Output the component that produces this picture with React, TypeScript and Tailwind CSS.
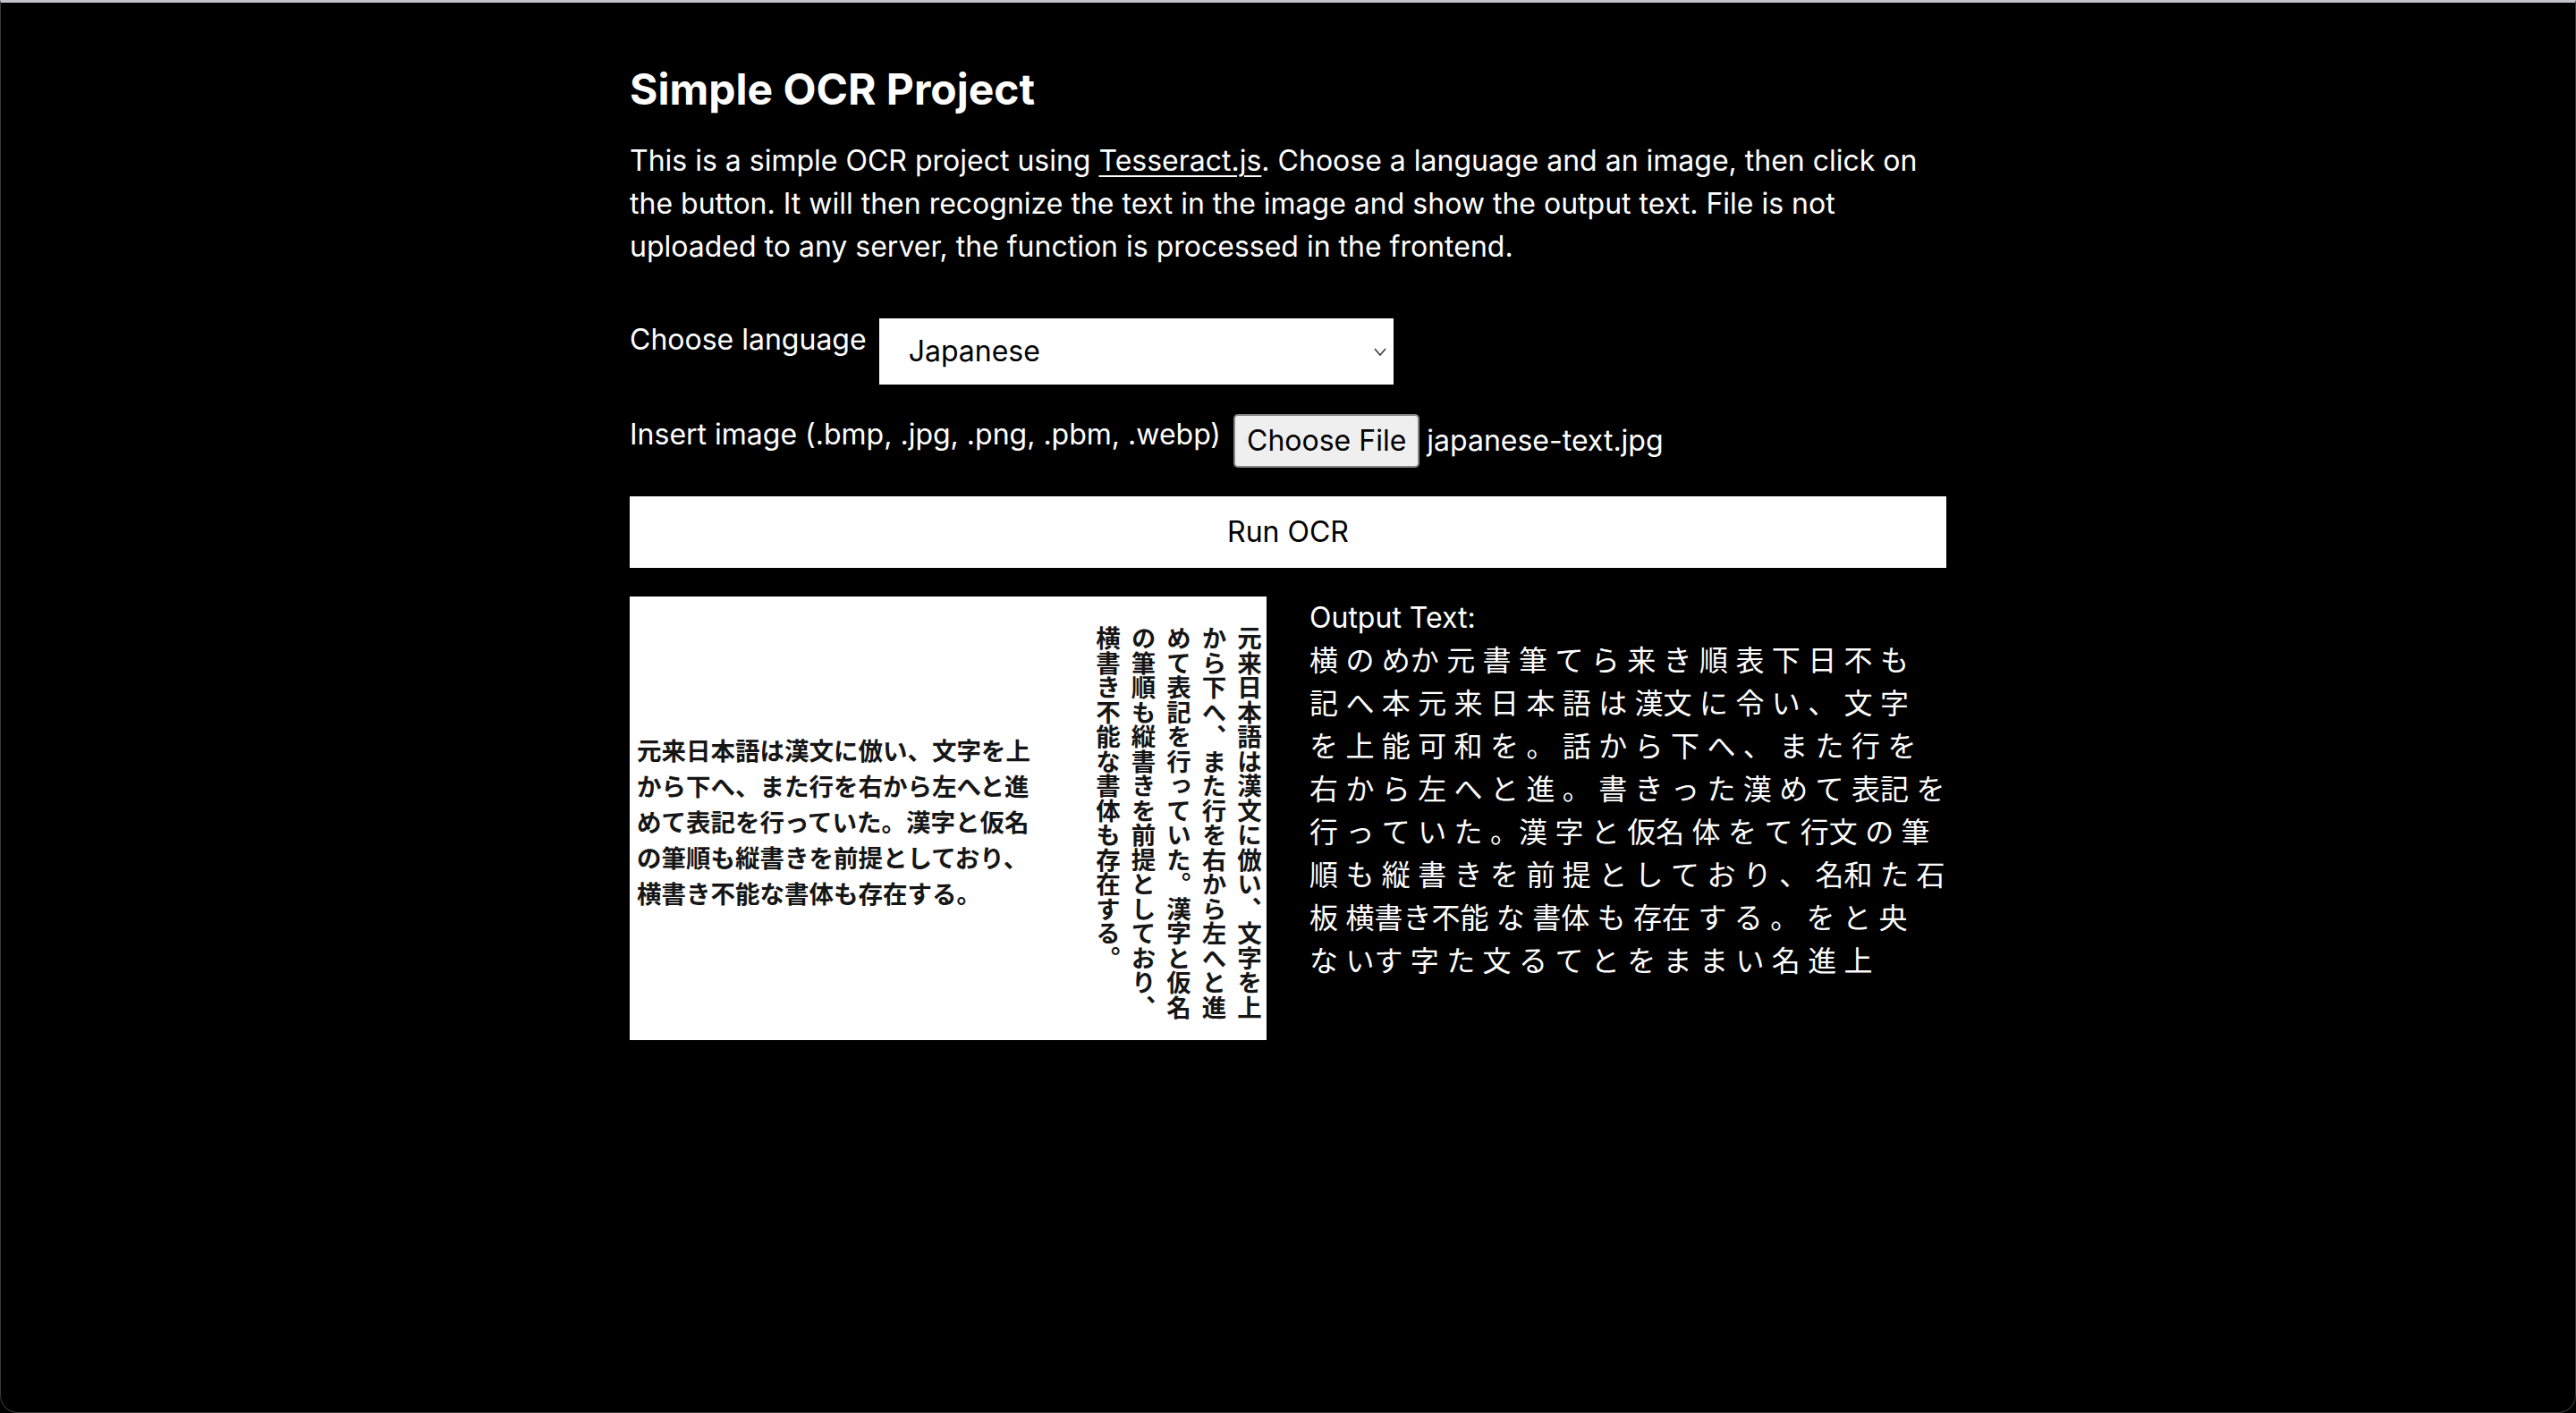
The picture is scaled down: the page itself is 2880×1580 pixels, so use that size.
import React from "react";

const outputLines = [
  "横 の めか 元 書 筆 て ら 来 き 順 表 下 日 不 も",
  "記 へ 本 元 来 日 本 語 は 漢文 に 令 い 、 文 字",
  "を 上 能 可 和 を 。 話 か ら 下 へ 、 ま た 行 を",
  "右 か ら 左 へ と 進 。 書 き っ た 漢 め て 表記 を",
  "行 っ て い た 。漢 字 と 仮名 体 を て 行文 の 筆",
  "順 も 縦 書 き を 前 提 と し て お り 、 名和 た 石",
  "板 横書き不能 な 書体 も 存在 す る 。 を と 央",
  "な いす 字 た 文 る て と を ま ま い 名 進 上",
];

const imageLines = [
  "元来日本語は漢文に倣い、文字を上",
  "から下へ、また行を右から左へと進",
  "めて表記を行っていた。漢字と仮名",
  "の筆順も縦書きを前提としており、",
  "横書き不能な書体も存在する。",
];

export default function App() {
  return (
    <div className="w-full bg-black">
      <div className="h-[1580px] box-border bg-black text-white border-t-[3px] border-t-[#c4c4c8] border-x border-b border-x-[#3a3a3a] border-b-[#3a3a3a] rounded-b-[20px] font-['Inter','Noto_Sans_CJK_JP',sans-serif]">
        <main className="mx-auto w-[1472px] pt-[61px]">
          <h1 className="text-[48px] leading-[72px] font-bold">Simple OCR Project</h1>
          <p className="mt-[20px] text-[32px] leading-[48px]">
            This is a simple OCR project using <a className="underline underline-offset-[5px] decoration-2">Tesseract.js</a>. Choose a
            language and an image, then click on the button. It will then recognize the text in the image and show the output text. File is
            not uploaded to any server, the function is processed in the frontend.
          </p>

          <div className="mt-[56px] flex flex-col gap-[32px]">
            <div className="flex items-start gap-[14px]">
              <span className="text-[32px] leading-[48px]">Choose language</span>
              <div className="w-[575px] h-[74px] bg-white text-black flex items-center justify-between pl-[33px] pr-[8px] text-[32px] leading-[48px]">
                <span>Japanese</span>
                <svg width="14" height="9" viewBox="0 0 14 9" fill="none">
                  <path d="M1 1 L7 8 L13 1" stroke="#3a3a3a" strokeWidth="1.6" />
                </svg>
              </div>
            </div>

            <div className="flex items-start gap-[14px]">
              <span className="text-[32px] leading-[48px]">Insert image (.bmp, .jpg, .png, .pbm, .webp)</span>
              <div className="flex items-center gap-[8px] h-[60px] mt-[1px]">
                <div className="h-[60px] flex items-center px-[13px] bg-[#efefef] text-black border-2 border-[#858585] rounded-[5px] text-[32px] leading-[40px]">
                  Choose File
                </div>
                <span className="text-[32px] leading-[40px]">japanese-text.jpg</span>
              </div>
            </div>

            <button className="w-full h-[80px] bg-white text-black text-[32px] leading-[48px]">Run OCR</button>

            <div className="grid grid-cols-2 gap-x-[48px]">
              <div className="h-[496px] bg-white flex justify-between text-[#161616] font-bold font-['Noto_Sans_CJK_JP',sans-serif] text-[27.5px] leading-[40px]">
                <div className="self-center pl-[8px] pt-[6px]">
                  {imageLines.map((l) => (
                    <div key={l}>{l}</div>
                  ))}
                </div>
                <div className="[writing-mode:vertical-rl] leading-[36px] pt-[33px] pr-[1px] h-full flex flex-col gap-[3.5px]">
                  {imageLines.map((l) => (
                    <div key={l}>{l}</div>
                  ))}
                </div>
              </div>
              <div className="text-[32px] leading-[48px]">
                <div>Output Text:</div>
                <div className="whitespace-pre [word-spacing:-0.6px]">{outputLines.join("\n")}</div>
              </div>
            </div>
          </div>
        </main>
      </div>
    </div>
  );
}
